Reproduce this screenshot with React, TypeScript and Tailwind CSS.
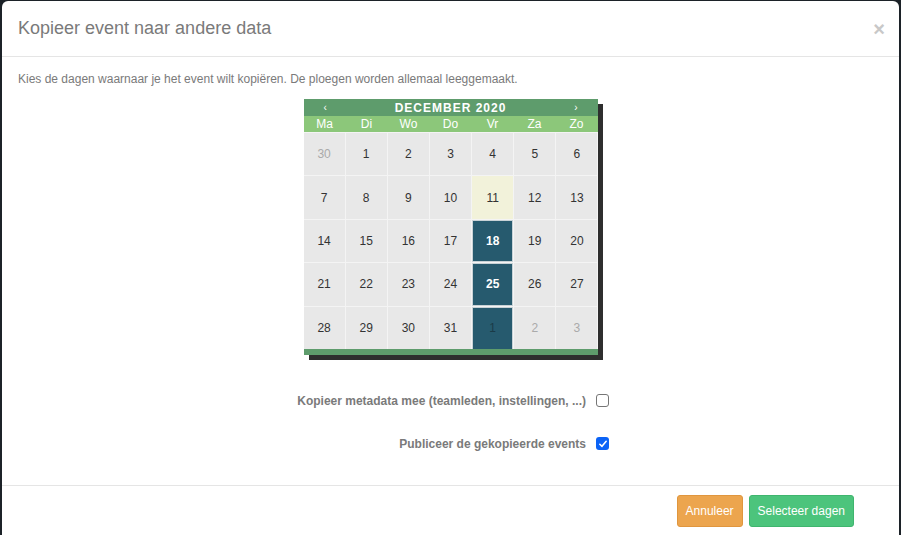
const WEEKDAYS = ['Ma', 'Di', 'Wo', 'Do', 'Vr', 'Za', 'Zo'];

type Day = { n: number; muted?: boolean; today?: boolean; selected?: boolean };

const WEEKS: Day[][] = [
  [{ n: 30, muted: true }, { n: 1 }, { n: 2 }, { n: 3 }, { n: 4 }, { n: 5 }, { n: 6 }],
  [{ n: 7 }, { n: 8 }, { n: 9 }, { n: 10 }, { n: 11, today: true }, { n: 12 }, { n: 13 }],
  [{ n: 14 }, { n: 15 }, { n: 16 }, { n: 17 }, { n: 18, selected: true }, { n: 19 }, { n: 20 }],
  [{ n: 21 }, { n: 22 }, { n: 23 }, { n: 24 }, { n: 25, selected: true }, { n: 26 }, { n: 27 }],
  [{ n: 28 }, { n: 29 }, { n: 30 }, { n: 31 }, { n: 1, muted: true, selected: true }, { n: 2, muted: true }, { n: 3, muted: true }],
];

function DayCell({ day }: { day: Day }) {
  let cls = 'bg-[#e8e8e8] text-[#333]';
  if (day.today) cls = 'bg-[#f2f2da] text-[#333]';
  if (day.muted) cls = 'bg-[#e8e8e8] text-[#aaa]';
  if (day.selected && day.muted) cls = 'bg-[#265a6e] text-[#1a3b48] border-x border-t border-[#c8d2d6]';
  else if (day.selected) cls = 'bg-[#265a6e] font-bold text-white border border-[#c8d2d6]';

  return (
    <div className={`flex h-[42.4px] items-center justify-center text-[12px] ${cls}`}>
      {day.n}
    </div>
  );
}

function Calendar() {
  return (
    <div className="w-[294px] shadow-[5px_5px_0_#2e2e2e]">
      <div className="flex h-[17px] items-center justify-between bg-[#5e9c6c] px-[20px] text-white">
        <span className="text-[10px] leading-none">‹</span>
        <span className="text-[12px] font-bold tracking-[1px] leading-none">DECEMBER 2020</span>
        <span className="text-[10px] leading-none">›</span>
      </div>
      <div className="grid h-[16px] grid-cols-7 bg-[#8cc77a] text-white">
        {WEEKDAYS.map((d) => (
          <div key={d} className="flex items-center justify-center text-[12px] leading-none">
            {d}
          </div>
        ))}
      </div>
      <div className="grid grid-cols-7 gap-[1px] bg-[#f4f4f4] pt-[1px]">
        {WEEKS.flat().map((day, i) => (
          <DayCell key={i} day={day} />
        ))}
      </div>
      <div className="h-[6px] bg-[#5e9c6c]" />
    </div>
  );
}

export default function App() {
  return (
    <div
      className="h-[535px] overflow-hidden bg-[#1c2228] px-[2px] pt-[1px]"
      style={{ fontFamily: '"Liberation Sans", Arial, sans-serif' }}
    >
      <div className="flex h-[540px] flex-col rounded-t-[6px] bg-white">
        {/* Header */}
        <div className="flex h-[56px] shrink-0 items-center justify-between border-b border-[#e5e5e5] pl-[16px] pr-[14px]">
          <h4 className="text-[18px] text-[#7a7a7a]">Kopieer event naar andere data</h4>
          <span className="text-[20px] font-bold leading-none text-[#c8c8c8]">×</span>
        </div>

        {/* Body */}
        <div className="pt-[14px]">
          <p className="pl-[16px] text-[12px] leading-[17px] text-[#7a7a7a]">
            Kies de dagen waarnaar je het event wilt kopiëren. De ploegen worden allemaal leeggemaakt.
          </p>
          <div className="mt-[11px] flex justify-center">
            <Calendar />
          </div>

          <div className="mt-[37px] flex w-[607px] flex-col items-end gap-[25px]">
            <label className="flex items-center gap-[10px]">
              <span className="text-[12px] font-bold text-[#7a7a7a]">
                Kopieer metadata mee (teamleden, instellingen, ...)
              </span>
              <span className="h-[13px] w-[13px] rounded-[3px] border border-[#767676] bg-white" />
            </label>
            <label className="flex items-center gap-[10px]">
              <span className="text-[12px] font-bold text-[#7a7a7a]">Publiceer de gekopieerde events</span>
              <span className="flex h-[13px] w-[13px] items-center justify-center rounded-[3px] bg-[#0b63f6]">
                <svg viewBox="0 0 12 12" className="h-[10px] w-[10px]">
                  <path d="M2.2 6.3 L4.8 8.8 L9.8 2.8" fill="none" stroke="white" strokeWidth="1.9" strokeLinecap="round" strokeLinejoin="round" />
                </svg>
              </span>
            </label>
          </div>
        </div>

        {/* Footer */}
        <div className="mt-[32px] flex justify-end gap-[6px] border-t border-[#e5e5e5] pr-[45px] pt-[9px]">
          <button className="h-[32px] rounded-[3px] border border-[#e0963e] bg-[#eca54e] px-[8px] text-[12px] text-white">
            Annuleer
          </button>
          <button className="h-[32px] rounded-[3px] border border-[#3fb56e] bg-[#4cc47c] px-[8px] text-[12px] text-white">
            Selecteer dagen
          </button>
        </div>
      </div>
    </div>
  );
}
